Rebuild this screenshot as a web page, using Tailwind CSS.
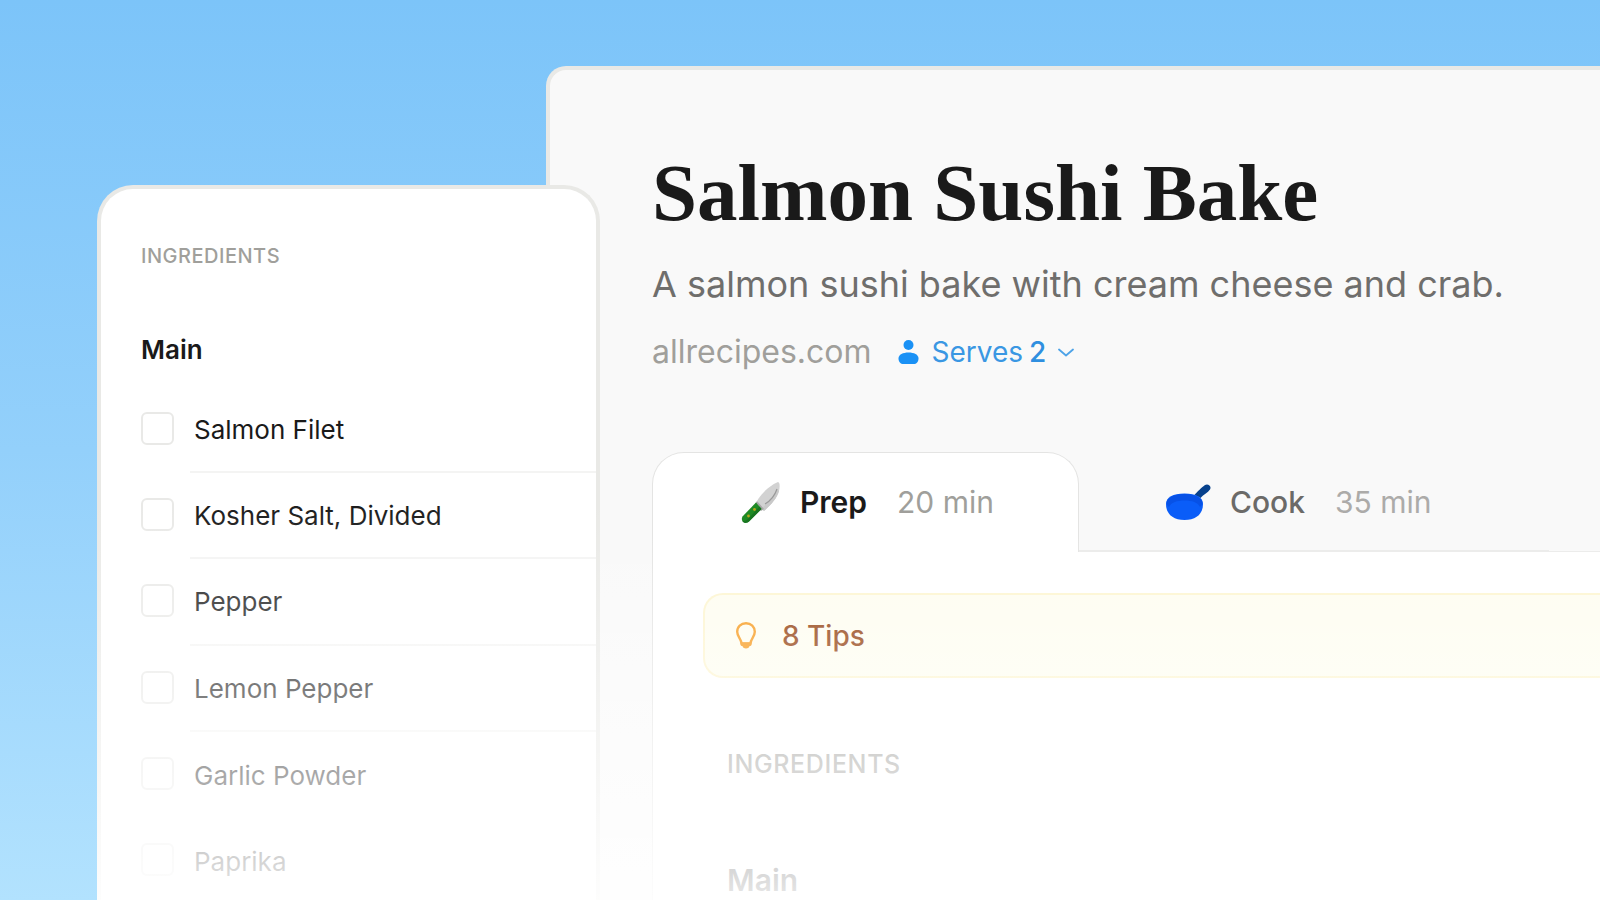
<!DOCTYPE html>
<html lang="en">
<head>
    <meta charset="UTF-8">
    <meta name="viewport" content="width=device-width, initial-scale=1.0">
    <title>Salmon Sushi Bake</title>
    <script src="https://cdn.jsdelivr.net/npm/@tailwindcss/browser@4"></script>
</head>
<body class="flex h-screen overflow-hidden bg-linear-to-b from-[#7cc4f9] via-[#93d0fb] to-[#b2e2fe] font-['Inter',sans-serif] text-[#1a1a1a]">

    <!-- Ingredients card -->
    <aside class="relative z-10 ml-[97px] mt-[185px] w-[503px] shrink-0 rounded-t-[36px] border-4 border-b-0 border-[#e9e9e6] bg-white pl-10 pt-[55px]">
        <h2 class="text-[20px] leading-6 font-medium tracking-wide text-[#a09f9b]">INGREDIENTS</h2>
        <h3 class="mt-[66px] text-[26px] leading-8 font-semibold">Main</h3>
        <ul class="mt-[21px] text-[26px]">
            <li class="flex h-[86px] items-center gap-4">
                <input type="checkbox" id="salmon" class="mb-1 size-[33px] shrink-0 appearance-none rounded-md border-2 border-[#e9e9e7] bg-white">
                <label for="salmon" class="flex h-full flex-1 items-center border-b-2 border-[#f4f4f3] pl-1">Salmon Filet</label>
            </li>
            <li class="flex h-[86px] items-center gap-4">
                <input type="checkbox" id="salt" class="mb-1 size-[33px] shrink-0 appearance-none rounded-md border-2 border-[#e9e9e7] bg-white">
                <label for="salt" class="flex h-full flex-1 items-center border-b-2 border-[#f4f4f3] pl-1">Kosher Salt, Divided</label>
            </li>
            <li class="flex h-[87px] items-center gap-4">
                <input type="checkbox" id="pepper" class="mb-1 size-[33px] shrink-0 appearance-none rounded-md border-2 border-[#e9e9e7] bg-white">
                <label for="pepper" class="flex h-full flex-1 items-center border-b-2 border-[#f4f4f3] pl-1">Pepper</label>
            </li>
            <li class="flex h-[86px] items-center gap-4">
                <input type="checkbox" id="lemon" class="mb-1 size-[33px] shrink-0 appearance-none rounded-md border-2 border-[#e9e9e7] bg-white">
                <label for="lemon" class="flex h-full flex-1 items-center border-b-2 border-[#f4f4f3] pl-1">Lemon Pepper</label>
            </li>
            <li class="flex h-[86px] items-center gap-4">
                <input type="checkbox" id="garlic" class="mb-1 size-[33px] shrink-0 appearance-none rounded-md border-2 border-[#e9e9e7] bg-white">
                <label for="garlic" class="flex h-full flex-1 items-center pl-1">Garlic Powder</label>
            </li>
            <li class="flex h-[87px] items-center gap-4">
                <input type="checkbox" id="paprika" class="mb-1 size-[33px] shrink-0 appearance-none rounded-md border-2 border-[#e9e9e7] bg-white">
                <label for="paprika" class="flex h-full flex-1 items-center pl-1">Paprika</label>
            </li>
        </ul>
        <!-- fade out -->
        <div class="pointer-events-none absolute -inset-x-1 bottom-0 h-[400px] bg-linear-to-t from-white/90 to-white/0"></div>
    </aside>

    <!-- Recipe -->
    <main class="relative -ml-[54px] mt-[66px] flex min-w-0 flex-1 flex-col rounded-tl-[20px] border-l-4 border-t-4 border-[#e9e9e6] bg-[#f9f9f9] pl-[102px] pt-[75px]">
        <h1 class="font-['Liberation_Serif',serif] text-[81px] leading-[96px] font-bold whitespace-nowrap">Salmon Sushi Bake</h1>
        <p class="mt-[19px] text-[36px] leading-[48px] whitespace-nowrap text-[#6f6e6c]">A salmon sushi bake with cream cheese and crab.</p>
        <div class="mt-6 flex h-10 items-center text-[32px]">
            <a href="#" class="text-[#a09f9b]">allrecipes.com</a>
            <svg class="ml-[26px] h-6 w-[21px]" viewBox="0 0 21 24" fill="#1a91f5">
                <circle cx="10.5" cy="5" r="5"/>
                <path d="M10.5 12.5C16 12.5 20.500 14.500 20.500 18.500C20.500 22 18.500 24 15.500 24H5.500C2.500 24 .5 22 .5 18.500C.5 14.500 5 12.500 10.500 12.500Z"/>
            </svg>
            <label for="serves" class="ml-[13px] text-[28px] text-[#3a97e3]">Serves</label>
            <select id="serves" class="ml-1.5 field-sizing-content appearance-none pr-[28px] text-[28px] font-medium text-[#2f8fe0]">
                <option>2</option>
            </select>
            <svg class="pointer-events-none -ml-4 h-[9px] w-4" viewBox="0 0 16 9" fill="none" stroke="#4da3e8" stroke-width="1.8" stroke-linecap="round" stroke-linejoin="round">
                <path d="M1 1.500L8 7.500L15 1.500"/>
            </svg>
        </div>

        <div class="mt-20 flex h-[100px] shrink-0">
            <button class="flex w-[427px] items-center rounded-t-[32px] border border-b-0 border-[#e4e4e3] bg-white pl-[88px] text-[30px]">
                <svg class="h-[42px] w-[39px]" viewBox="0 0 39 42">
                    <path d="M16 19C20 12 29 3 37 0C39 .5 39 5 38 9C36 16 30 23 23 29L20 27Z" fill="#d2d2d2"/>
                    <path d="M36 7C34 13 28 20 21 26L23 29C30 23 36 16 38 9Z" fill="#c9c9c9"/>
                    <path d="M36 7C34 13 29 19 24 22" fill="none" stroke="#9a9a9a" stroke-width="1.200"/>
                    <path d="M16 19L23 27L20 29L14 22Z" fill="#a8a8a8"/>
                    <path d="M15 20.500L20.500 27L8 39.500C4 43 -1 39 1.500 34.500Z" fill="#1f8a24"/>
                    <path d="M20.500 27L8 39.500C5 42 2 41 1.200 38.500C4 40 6 38 8 36L18.500 24.500Z" fill="#187420"/>
                    <circle cx="13.500" cy="27.500" r="1.400" fill="#b6a51c"/>
                    <circle cx="7.500" cy="34" r="1.400" fill="#b6a51c"/>
                </svg>
                <span class="ml-[20px] font-semibold">Prep</span>
                <span class="ml-[30px] text-[#a09f9b]">20 min</span>
            </button>
            <div class="flex flex-1 border-b border-[#ebebea]">
                <button class="flex w-[470px] shrink-0 items-center border-b border-[#ebebea] pt-0.5 pl-[87px] text-[30px]">
                    <svg class="h-9 w-[45px]" viewBox="0 0 45 36">
                        <path d="M28.500 11C31 8 36 3 39 1C42 -1 46 2.500 44 5.500C42 8.500 37 11 34.500 14Z" fill="#07418c"/>
                        <path d="M0 20C0 13.500 7 9.500 18.500 9.500S37 13.500 37 20C37 30 30 36 18.500 36S0 30 0 20Z" fill="#0a5df8"/>
                        <path d="M.5 19C1 13.500 8 10 18.500 10S36 13.500 36.500 19C36 21 35 22 34 23C32 18.500 26 16.500 18.500 16.500S5 18.500 3 23C2 22 1 21 .5 19Z" fill="#0751e6"/>
                    </svg>
                    <span class="ml-[19px] font-medium text-[#6b6a68]">Cook</span>
                    <span class="ml-[30px] text-[#acaba9]">35 min</span>
                </button>
            </div>
        </div>

        <section class="flex-1 border-l border-[#e4e4e3] bg-white pl-[50px] pt-[41px]">
            <button class="flex h-[85px] w-full items-center rounded-l-[20px] border-2 border-r-0 border-[#fdf5d0] bg-[#fefdf0] pl-[31px] text-[28px] font-medium text-[#92400e]">
                <svg class="h-[27px] w-5" viewBox="0 0 20 27" fill="none" stroke="#f79a1c" stroke-width="2.400" stroke-linejoin="round">
                    <path d="M5.500 21.500C5.500 17 1.200 15 1.200 9.800C1.200 4.500 5 1.200 10 1.200S18.800 4.500 18.800 9.800C18.800 15 14.500 17 14.500 21.500Z"/>
                    <path d="M4.500 20.500H15.500V22.500C15.500 23.500 14.500 24 13.500 24C13.500 25.500 12 26.500 10 26.500S6.500 25.500 6.500 24C5.500 24 4.500 23.500 4.500 22.500Z" fill="#f79a1c" stroke="none"/>
                </svg>
                <span class="ml-[26px]">8 Tips</span>
            </button>
            <h2 class="mt-[70px] ml-6 text-[25px] leading-8 font-medium tracking-wide text-[#a09f9b]">INGREDIENTS</h2>
            <h3 class="mt-20 ml-6 text-[30px] leading-10 font-semibold">Main</h3>
        </section>
        <!-- fade out -->
        <div class="pointer-events-none absolute inset-x-0 bottom-0 h-[370px] bg-linear-to-t from-white/90 to-white/0"></div>
    </main>
</body>
</html>
